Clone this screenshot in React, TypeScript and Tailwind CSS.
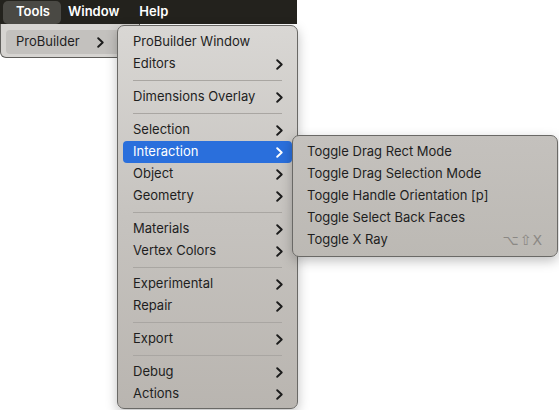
import React from "react";

type Item = { label: string; sub?: boolean; active?: boolean } | "sep";

const mainItems: Item[] = [
  { label: "ProBuilder Window" },
  { label: "Editors", sub: true },
  "sep",
  { label: "Dimensions Overlay", sub: true },
  "sep",
  { label: "Selection", sub: true },
  { label: "Interaction", sub: true, active: true },
  { label: "Object", sub: true },
  { label: "Geometry", sub: true },
  "sep",
  { label: "Materials", sub: true },
  { label: "Vertex Colors", sub: true },
  "sep",
  { label: "Experimental", sub: true },
  { label: "Repair", sub: true },
  "sep",
  { label: "Export", sub: true },
  "sep",
  { label: "Debug", sub: true },
  { label: "Actions", sub: true },
];

const interactionItems = [
  "Toggle Drag Rect Mode",
  "Toggle Drag Selection Mode",
  "Toggle Handle Orientation [p]",
  "Toggle Select Back Faces",
  "Toggle X Ray",
];

function Chevron({ light = false }: { light?: boolean }) {
  return (
    <svg width="7" height="11" viewBox="0 0 7 11" className="shrink-0">
      <polyline
        points="1.2,1.2 5.7,5.5 1.2,9.8"
        fill="none"
        stroke={light ? "#ffffff" : "#1c1c1c"}
        strokeWidth="1.9"
        strokeLinecap="round"
        strokeLinejoin="round"
      />
    </svg>
  );
}

export default function App() {
  return (
    <div
      className="relative w-[559px] h-[410px] bg-white overflow-hidden text-[13px]"
      style={{ fontFamily: "Inter, 'DejaVu Sans', sans-serif" }}
    >
      {/* Menu bar */}
      <div className="w-[297px] h-[24px] bg-[#23221d] flex items-center text-white font-semibold">
        <div className="ml-[3px] h-[23px] w-[58px] rounded-[5px] bg-[#4a4944] flex items-center pl-[13px]">
          Tools
        </div>
        <div className="ml-[7px]">Window</div>
        <div className="ml-[20px]">Help</div>
      </div>

      {/* Tools dropdown */}
      <div className="absolute left-0 top-[24px] w-[140px] h-[34px] bg-[#d6d4d1] border border-[#5f5e5b] border-t-0 rounded-b-[6px] px-[5px] pt-[6px]">
        <div className="h-[24px] rounded-[4px] bg-[#c3c1be] flex items-center pl-[10px] pr-[10px] text-[#1e1e1e]">
          <span className="flex-1">ProBuilder</span>
          <span className="mr-[20px]">
            <Chevron />
          </span>
        </div>
      </div>

      {/* ProBuilder menu */}
      <div className="absolute left-[117px] top-[25px] w-[181px] h-[384px] rounded-[7px] border border-[#6a6966] bg-gradient-to-b from-[#d9d7d4] via-[#c6c3bf] to-[#b9b5b0] shadow-[0_4px_12px_rgba(0,0,0,0.25)] pt-[5px] pb-[4px] text-[#1e1e1e]">
        {mainItems.map((item, i) =>
          item === "sep" ? (
            <div key={i} className="h-[11px] flex items-center px-[15px]">
              <div className="h-px w-full bg-[#a9a6a2]" />
            </div>
          ) : (
            <div
              key={i}
              className={`mx-[5px] h-[22px] rounded-[4px] flex items-center pl-[10px] pr-[9px] ${
                item.active ? "bg-[#2a6fdc] text-white" : ""
              }`}
            >
              <span className="flex-1 whitespace-nowrap">{item.label}</span>
              {item.sub && <Chevron light={item.active} />}
            </div>
          )
        )}
      </div>

      {/* Interaction submenu */}
      <div className="absolute left-[292px] top-[135px] w-[266px] h-[122px] rounded-[7px] border border-[#6a6966] bg-gradient-to-b from-[#c4c1bd] to-[#bcb9b4] shadow-[0_4px_12px_rgba(0,0,0,0.25)] pt-[5px] text-[#1e1e1e]">
        {interactionItems.map((label, i) => (
          <div key={label} className="mx-[5px] h-[22px] flex items-center pl-[9px] pr-[9px]">
            <span className="flex-1 whitespace-nowrap">{label}</span>
            {i === 4 && (
              <span
                className="text-[14px] text-[#8b8884] tracking-[1px]"
                style={{ fontFamily: "'DejaVu Sans', sans-serif" }}
              >
                ⌥⇧X
              </span>
            )}
          </div>
        ))}
      </div>
    </div>
  );
}
